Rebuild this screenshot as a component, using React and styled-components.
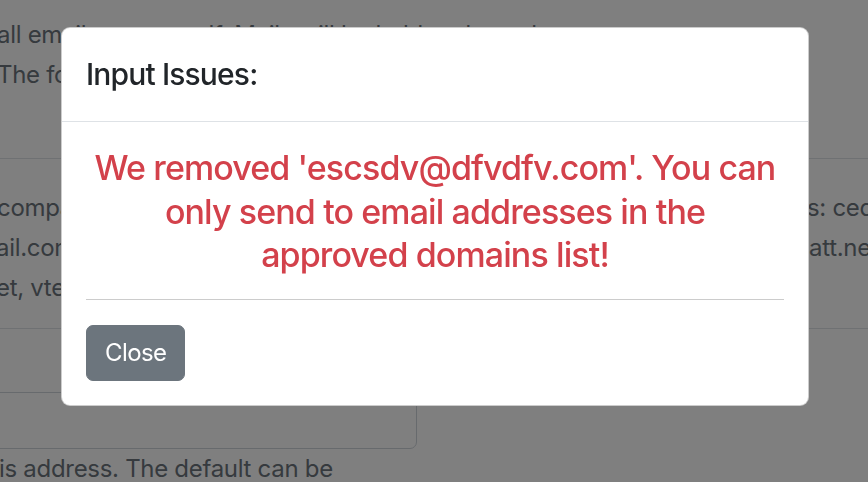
import React from "react";
import styled, { createGlobalStyle } from "styled-components";

const Global = createGlobalStyle`
  html, body { margin: 0; padding: 0; background: #ffffff; overflow: hidden; }
  body { font-family: Inter, "Noto Sans", "Liberation Sans", sans-serif; }
  * { box-sizing: border-box; }
`;

const Page = styled.div`
  width: 868px;
  height: 482px;
  overflow: hidden;
  color: #6c757d;
  font-size: 24px;
  line-height: 40px;
  letter-spacing: -0.3px;
  display: flex;
  flex-direction: column;
  padding-top: 15px;
`;

const Line = styled.div`
  display: grid;
  grid-template-columns: 810px 1fr;
  white-space: nowrap;
  overflow: hidden;
  margin-left: ${(p) => p.$shift || 0}px;
`;

const Cell = styled.span`
  overflow: hidden;
  padding-left: ${(p) => p.$pad || 0}px;
`;

const Intro = styled.div`
  margin-left: -3px;
  white-space: nowrap;
`;

const Section = styled.div`
  margin-top: 63px;
  border-top: 1px solid #dee2e6;
  border-bottom: 1px solid #dee2e6;
  padding: 29px 0 20px;
`;

const InputBox = styled.div`
  margin-top: 63px;
  margin-left: -20px;
  width: 437px;
  height: 57px;
  flex-shrink: 0;
  border: 1px solid #ced4da;
  border-radius: 7px;
  background: #fff;
`;

const Help = styled.div`
  margin-left: -1px;
  white-space: nowrap;
`;

const Backdrop = styled.div`
  position: fixed;
  inset: 0;
  background: rgba(0, 0, 0, 0.5);
`;

const Dialog = styled.div`
  position: fixed;
  top: 27px;
  left: 61px;
  width: 748px;
  background: #fff;
  border: 1px solid rgba(0, 0, 0, 0.2);
  border-radius: 9px;
  display: flex;
  flex-direction: column;
`;

const Header = styled.div`
  padding: 24px;
  border-bottom: 1px solid #dee2e6;
`;

const Title = styled.h5`
  margin: 0;
  font-size: 30px;
  line-height: 45px;
  font-weight: 500;
  letter-spacing: -0.85px;
  color: #212529;
`;

const Body = styled.div`
  padding: 24px;
  display: flex;
  flex-direction: column;
  align-items: flex-start;
`;

const Message = styled.h4`
  margin: 0 0 22px;
  width: 100%;
  text-align: center;
  font-size: 34px;
  line-height: 43.5px;
  font-weight: 500;
  letter-spacing: -0.9px;
  white-space: nowrap;
  color: #d3414b;
`;

const Rule = styled.hr`
  width: 100%;
  margin: 0 0 25px;
  border: 0;
  border-top: 1px solid #cccccc;
`;

const Button = styled.button`
  font-family: inherit;
  font-size: 24px;
  line-height: 36px;
  letter-spacing: -0.6px;
  padding: 9px 18px;
  border: 1px solid #6c757d;
  border-radius: 7px;
  background: #6c757d;
  color: #fff;
  cursor: pointer;
`;

export default function App() {
  return (
    <>
      <Global />
      <Page>
        <Intro>all emails to yourself. Mails will be held and sent later.</Intro>
        <Intro>The following addresses will be used instead.</Intro>
        <Section>
          <Line $shift={-3}>
            <Cell>company domains that you may send to. Approved domain</Cell>
            <Cell>s: cedar.com, acme.org</Cell>
          </Line>
          <Line $shift={-4}>
            <Cell>ail.com, yahoo.com, outlook.com, hotmail.com, icloud.com,</Cell>
            <Cell $pad={3}>att.net, aol.com</Cell>
          </Line>
          <Line $shift={-4}>
            <Cell>et, vtex.com, example.org</Cell>
            <Cell></Cell>
          </Line>
        </Section>
        <InputBox />
        <Help>is address. The default can be</Help>
      </Page>
      <Backdrop />
      <Dialog role="dialog">
        <Header>
          <Title>Input Issues:</Title>
        </Header>
        <Body>
          <Message>
            We removed 'escsdv@dfvdfv.com'. You can
            <br />
            only send to email addresses in the
            <br />
            approved domains list!
          </Message>
          <Rule />
          <Button>Close</Button>
        </Body>
      </Dialog>
    </>
  );
}
